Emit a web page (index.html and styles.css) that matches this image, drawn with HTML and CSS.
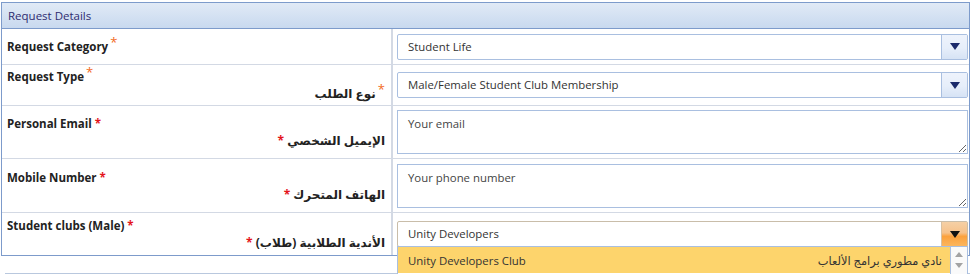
FILE: index.html
```html
<!DOCTYPE html>
<html lang="en">
<head>
    <meta charset="UTF-8">
    <meta name="viewport" content="width=device-width, initial-scale=1.0">
    <title>Request Details</title>
    <link rel="stylesheet" href="styles.css">
</head>
<body>
    <div class="panel">
        <div class="panel-head">Request Details</div>
        <table class="form">
            <tr class="row-short">
                <td class="label">
                    <div class="en">Request Category<sup class="req-o">*</sup></div>
                </td>
                <td class="field">
                    <div class="combo">
                        <span class="combo-text">Student Life</span>
                        <span class="combo-btn"><span class="arrow"></span></span>
                    </div>
                </td>
            </tr>
            <tr class="row-two">
                <td class="label">
                    <div class="en">Request Type<sup class="req-o">*</sup></div>
                    <div class="ar"><span dir="rtl">نوع الطلب</span><sup class="req-o">*</sup></div>
                </td>
                <td class="field">
                    <div class="combo">
                        <span class="combo-text">Male/Female Student Club Membership</span>
                        <span class="combo-btn"><span class="arrow"></span></span>
                    </div>
                </td>
            </tr>
            <tr class="row-area">
                <td class="label">
                    <div class="en">Personal Email <span class="req">*</span></div>
                    <div class="ar"><span class="req">*</span> <span dir="rtl">الإيميل الشخصي</span></div>
                </td>
                <td class="field">
                    <textarea class="area" placeholder="Your email"></textarea>
                </td>
            </tr>
            <tr class="row-area tall">
                <td class="label">
                    <div class="en">Mobile Number <span class="req">*</span></div>
                    <div class="ar"><span class="req">*</span> <span dir="rtl">الهاتف المتحرك</span></div>
                </td>
                <td class="field">
                    <textarea class="area" placeholder="Your phone number"></textarea>
                </td>
            </tr>
            <tr class="row-last">
                <td class="label">
                    <div class="en">Student clubs (Male) <span class="req">*</span></div>
                    <div class="ar"><span class="req">*</span> <span dir="rtl">الأندية الطلابية (طلاب)</span></div>
                </td>
                <td class="field">
                    <div class="combo combo-open">
                        <span class="combo-text">Unity Developers</span>
                        <span class="combo-btn"><span class="arrow"></span></span>
                        <div class="combo-list">
                            <div class="combo-item selected">
                                <span>Unity Developers Club</span>
                                <span dir="rtl">نادي مطوري برامج الألعاب</span>
                            </div>
                            <div class="scroll">
                                <span class="scroll-up"></span>
                                <span class="scroll-down"></span>
                            </div>
                        </div>
                    </div>
                </td>
            </tr>
        </table>
    </div>
    <div class="next-panel"></div>
</body>
</html>
```

FILE: styles.css
```css
html, body {
    overflow: hidden;
}
body {
    margin: 0;
    padding: 2px 1px 0 1px;
    font-family: "Open Sans", "DejaVu Sans", sans-serif;
    color: #333;
}
.panel {
    border: 1px solid #7d9bcb;
}
.panel-head {
    height: 25px;
    line-height: 25px;
    padding-left: 6px;
    font-size: 11.5px;
    color: #2f2b70;
    background: linear-gradient(#e1eaf6, #c8d9ef);
    border-bottom: 1px solid #7d9bcb;
}
.form {
    width: 100%;
    border-collapse: collapse;
    table-layout: fixed;
}
.form td {
    padding: 0;
    vertical-align: middle;
    border-bottom: 1px solid #d3d9e4;
}
.form tr.row-last td {
    border-bottom: none;
}
.row-short td {
    height: 35px;
}
.row-two td {
    height: 40px;
}
.row-area td {
    height: 52px;
}
.row-area.tall td {
    height: 53px;
}
.row-last td {
    height: 42px;
}
.form td.label {
    width: 379px;
    padding: 0 5px 0 5px;
    border-right: 2px solid #d3d9e4;
    font-size: 11.5px;
    font-weight: bold;
    color: #222;
}
.label .en {
    line-height: 17px;
}
.label .ar {
    line-height: 17px;
    text-align: right;
    padding-right: 1px;
    font-size: 12px;
}
.req-o {
    color: #f26b1d;
    font-weight: normal;
    font-size: 13px;
    vertical-align: 4px;
    line-height: 0;
    margin-left: 2px;
}
.req {
    color: #e4141b;
}
.form td.field {
    padding: 0 1px 0 4px;
}
.combo {
    position: relative;
    display: flex;
    height: 24px;
    border: 1px solid #a9bfe0;
    border-radius: 2px;
    background: #fff;
    font-size: 11.4px;
}
.combo-text {
    flex: 1;
    line-height: 24px;
    padding-left: 10px;
}
.combo-btn {
    width: 25px;
    display: flex;
    align-items: center;
    justify-content: center;
    border-left: 1px solid #a9bfe0;
    background: linear-gradient(#eef3fc, #e6eefa 55%, #d6e3f5);
}
.arrow {
    width: 0;
    height: 0;
    border-left: 5px solid transparent;
    border-right: 5px solid transparent;
    border-top: 7px solid #1b2a6b;
}
.combo-open {
    border-color: #c9bda9;
}
.combo-open .combo-btn {
    border-left-color: #d7c1a3;
    background: linear-gradient(#f5d0a6, #f6c28b 45%, #fba13c 60%, #fcb65e);
}
.combo-open .arrow {
    border-top-color: #111;
}
.combo-list {
    position: absolute;
    top: 24px;
    left: -1px;
    right: -1px;
    height: 28px;
    display: flex;
    border: 1px solid #a9bfe0;
    background: #fff;
}
.combo-item {
    flex: 1;
    height: 26px;
    display: flex;
    justify-content: space-between;
    align-items: center;
    padding: 0 8px 0 10px;
}
.combo-item.selected {
    background: #fdd46c;
}
.scroll {
    width: 16px;
    position: relative;
    background: #fafafa;
    border-left: 1px solid #a9bfe0;
}
.scroll-up,
.scroll-down {
    position: absolute;
    left: 4px;
    width: 0;
    height: 0;
    border-left: 4px solid transparent;
    border-right: 4px solid transparent;
}
.scroll-up {
    top: 5px;
    border-bottom: 5px solid #a3a3a3;
}
.scroll-down {
    top: 16px;
    border-top: 5px solid #a3a3a3;
}
.area {
    display: block;
    box-sizing: border-box;
    width: 100%;
    height: 44px;
    margin: 0;
    padding: 5px 10px;
    border: 1px solid #a9bfe0;
    border-radius: 0;
    font-family: "Open Sans", "DejaVu Sans", sans-serif;
    font-size: 11.4px;
    resize: vertical;
}
.area::placeholder {
    color: #444;
}
.next-panel {
    margin: 17px 0 0 4px;
    border-top: 1px solid #b9c8de;
}
```
